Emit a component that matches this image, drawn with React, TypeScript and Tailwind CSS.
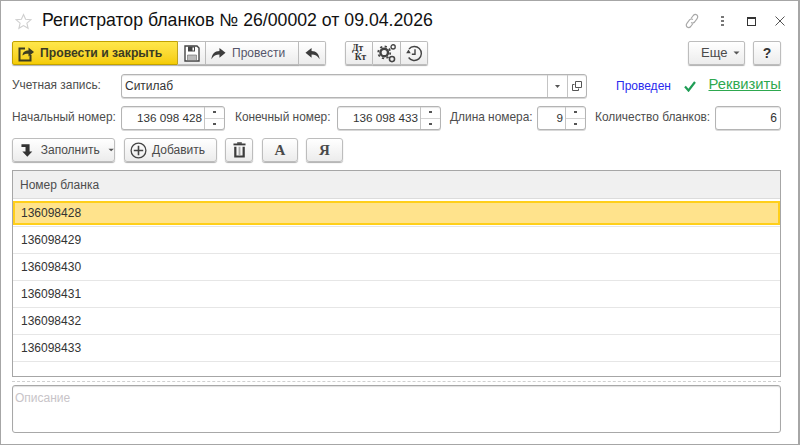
import React from 'react';

const BTN = 'flex items-center justify-center h-[24px] border border-[#bdbdbd] bg-linear-to-b from-white to-[#ececec] text-[12px] text-[#4a4a4a] rounded-[2px] shadow-[0_1px_1px_#b0b0b0]';
const FIELD = 'flex items-stretch h-[24px] border border-[#b4b4b4] rounded-[3px] bg-white shadow-[inset_0_1px_1px_#e4e4e4,0_1px_0_#d8d8d8]';
const LABEL = 'text-[11.9px] text-[#4d4d4d] whitespace-nowrap';

const Caret = () => (
  <svg width="7" height="4" viewBox="0 0 7 4"><path d="M0.5 0.5h6L3.5 3.5z" fill="#555" /></svg>
);

const Star = () => (
  <svg width="17" height="17" viewBox="0 0 17 17" fill="none"><path d="M8.5 1.5l2.1 4.8 5.2.5-3.9 3.4 1.2 5.1-4.6-2.7-4.6 2.7 1.2-5.1L1.2 6.8l5.2-.5z" stroke="#cfcfcf" strokeWidth="1.1" /></svg>
);

const PostClose = () => (
  <svg width="17" height="17" viewBox="0 0 17 17" fill="none">
    <path d="M7 3.5H1.5v12h11V10" stroke="#3b3b22" strokeWidth="2" />
    <path d="M4.5 10.5c.2-3.6 2.6-5 6-5V2.5l5.5 4.6-5.5 4.4V8.7c-2.5 0-4.5.3-6 1.8z" fill="#3b3b22" />
  </svg>
);

const Save = () => (
  <svg width="16" height="17" viewBox="0 0 16 17" fill="none">
    <path d="M1 1h12l2 2v13H1z" stroke="#444" strokeWidth="1.4" fill="#fff" />
    <path d="M4 1.5h7v5H4z" fill="#444" />
    <path d="M8.5 2.5h1.5v3H8.5z" fill="#fff" />
    <path d="M3.5 10h9v5.5h-9z" fill="#bbb" stroke="#666" strokeWidth="0.6" />
  </svg>
);

const ArrowRight = () => (
  <svg width="15" height="13" viewBox="0 0 16 13"><path d="M0.5 12.5C.6 7.5 4 3.8 9 3.8V0.5l6.5 5.3L9 11V7.6c-3.6 0-6.6 1.5-8.5 4.9z" fill="#3c3c3c" /></svg>
);

const ArrowLeft = () => (
  <svg width="15" height="13" viewBox="0 0 16 13"><path d="M15.5 12.5C15.4 7.5 12 3.8 7 3.8V0.5L.5 5.8 7 11V7.6c3.6 0 6.6 1.5 8.5 4.9z" fill="#3c3c3c" /></svg>
);

const Gears = () => (
  <svg width="20" height="20" viewBox="0 0 18 18" fill="none">
    <circle cx="6.5" cy="8.5" r="3.4" stroke="#444" strokeWidth="2.2" />
    <circle cx="6.5" cy="8.5" r="5.4" stroke="#444" strokeWidth="1.6" strokeDasharray="2 2.2" />
    <circle cx="14.5" cy="3.5" r="1.9" stroke="#444" strokeWidth="1.2" />
    <circle cx="13.5" cy="14.5" r="2.3" stroke="#444" strokeWidth="1.4" />
  </svg>
);

const History = () => (
  <svg width="17" height="17" viewBox="0 0 17 17" fill="none">
    <path d="M3 4A7 7 0 1 1 2.6 12.5" stroke="#444" strokeWidth="1.4" />
    <path d="M0.2 8.2h4.6L2.5 4.6z" fill="#444" />
    <path d="M9 4.2v5H5.8" stroke="#444" strokeWidth="1.4" />
  </svg>
);

const Fill = () => (
  <svg width="13" height="15" viewBox="0 0 13 15"><path d="M0.5 0.5h9v8h3l-5.5 6-5.500-6h3.500V3.500h-4.500z" fill="#333" /></svg>
);

const Plus = () => (
  <svg width="17" height="17" viewBox="0 0 17 17" fill="none">
    <circle cx="8.5" cy="8.5" r="7.4" stroke="#444" strokeWidth="1.3" />
    <path d="M8.5 3.8v9.4M3.8 8.5h9.4" stroke="#444" strokeWidth="1.6" />
  </svg>
);

const Trash = () => (
  <svg width="13" height="16" viewBox="0 0 14 17" fill="none">
    <path d="M.5 2.5h13" stroke="#3c3c3c" strokeWidth="2" />
    <path d="M4.5 1h5" stroke="#3c3c3c" strokeWidth="1.6" />
    <path d="M2.500 5v10.500h9V5" stroke="#3c3c3c" strokeWidth="2.4" />
    <path d="M6 5h2v9H6z" fill="#a8a8a8" />
  </svg>
);

const Link = () => (
  <svg width="16" height="16" viewBox="0 0 16 16" fill="none" stroke="#a8a8a8" strokeWidth="1.2">
    <path d="M7 5.5l2.300-3c1-1.200 2.600-1.300 3.600-.5s1.100 2.500.2 3.600L10.600 9c-1 1.200-2.600 1.300-3.500.5" />
    <path d="M9 10.500l-2.300 3c-1 1.200-2.600 1.300-3.600.5S2 11.500 2.900 10.400L5.400 7c1-1.200 2.600-1.300 3.500-.5" />
  </svg>
);

const Spin = () => (
  <div className="flex flex-col w-[20px] border-l border-[#c4c4c4]">
    <div className="flex-1 flex items-center justify-center border-b border-[#d4d4d4]">
      <span className="block w-[3px] h-[2px] bg-[#555]" />
    </div>
    <div className="flex-1 flex items-center justify-center">
      <span className="block w-[3px] h-[2px] bg-[#555]" />
    </div>
  </div>
);

const NumberField = ({ value, className }: { value: string; className: string }) => (
  <div className={`${FIELD} ${className}`}>
    <div className="flex-1 flex items-center justify-end pr-[2px] text-[11.7px] text-[#333]">{value}</div>
    <Spin />
  </div>
);

const rows = ['136098429', '136098430', '136098431', '136098432', '136098433'];

export default function App() {
  return (
    <div className="w-[800px] h-[445px] overflow-hidden border border-[#a6a6a6] border-r-2 bg-white flex flex-col pl-[11px] pr-[17px] font-['Liberation_Sans',Arial,sans-serif]">
      {/* Заголовок */}
      <div className="flex items-center h-[40px] shrink-0">
        <span className="ml-[3px] mr-[10px] flex"><Star /></span>
        <h1 className="text-[17.7px] text-[#111] leading-none whitespace-nowrap -mt-[1px]">Регистратор бланков № 26/00002 от 09.04.2026</h1>
        <div className="ml-auto flex items-center mr-[-4px]">
          <Link />
          <span className="ml-[21px] flex flex-col gap-[2px]">
            <span className="block w-[3px] h-[2px] bg-[#777]" />
            <span className="block w-[3px] h-[2px] bg-[#777]" />
            <span className="block w-[3px] h-[2px] bg-[#777]" />
          </span>
          <span className="ml-[23px] block w-[9px] h-[9px] border border-[#333] border-t-2" />
          <svg className="ml-[19px]" width="10" height="10" viewBox="0 0 10 10"><path d="M.5.5l9 9M9.5.5l-9 9" stroke="#555" strokeWidth="1" /></svg>
        </div>
      </div>

      {/* Командная панель */}
      <div className="flex items-center shrink-0">
        <button className="flex items-center w-[166px] h-[24px] border border-[#c2a200] rounded-l-[2px] bg-linear-to-b from-[#ffe74a] to-[#f5cc00] text-[12.2px] font-bold text-[#3b3b22] shadow-[0_1px_1px_#b0b0b0]">
          <span className="ml-[5px] mr-[5px] flex"><PostClose /></span>
          Провести и закрыть
        </button>
        <button className={`${BTN} w-[28px] border-l-0 rounded-none`}><Save /></button>
        <button className={`${BTN} w-[93px] border-l-0 rounded-none gap-[6px] justify-start pl-[5px]`}><ArrowRight /><span className="text-[#55556a]">Провести</span></button>
        <button className={`${BTN} w-[27px] border-l-0 rounded-l-none`}><ArrowLeft /></button>
        <button className={`${BTN} ml-[19px] w-[28px] rounded-r-none font-['Liberation_Serif',serif] font-bold text-[#333]`}>
          <span className="flex flex-col text-[9.5px] leading-[9px]"><span className="-ml-[3px]">Дт</span><span className="ml-[3px]">Кт</span></span>
        </button>
        <button className={`${BTN} w-[28px] border-l-0 rounded-none`}><Gears /></button>
        <button className={`${BTN} w-[27px] border-l-0 rounded-l-none`}><History /></button>
        <button className={`${BTN} ml-auto w-[57px] gap-[6px] justify-start pl-[12px]`}><span className="text-[13px]">Еще</span><Caret /></button>
        <button className={`${BTN} ml-[8px] w-[28px] text-[14px] font-bold text-[#333]`}>?</button>
      </div>

      {/* Учетная запись */}
      <div className="flex items-center mt-[9px] shrink-0">
        <span className={`${LABEL} w-[109px]`}>Учетная запись:</span>
        <div className={`${FIELD} w-[466px]`}>
          <div className="flex-1 flex items-center pl-[3px] text-[12px] text-[#333]">Ситилаб</div>
          <div className="w-[20px] flex items-center justify-center border-l border-[#c4c4c4]"><svg width="5" height="3" viewBox="0 0 5 3"><path d="M0 0h5L2.5 3z" fill="#555" /></svg></div>
          <div className="w-[19px] flex items-center justify-center border-l border-[#c4c4c4]">
            <svg width="10" height="10" viewBox="0 0 10 10" fill="none" stroke="#555"><path d="M3.5 .5h6v6h-6z" /><path d="M2.5 3.5H.5v6h6v-2" /></svg>
          </div>
        </div>
        <span className="ml-[29px] text-[12px] text-[#2a2aee] whitespace-nowrap">Проведен</span>
        <svg className="ml-[13px]" width="12" height="11" viewBox="0 0 12 11" fill="none"><path d="M1 5.5l3.5 4L11 1" stroke="#1f9d55" strokeWidth="2.2" /></svg>
        <a className="ml-auto text-[14.8px] text-[#2ea84f] underline whitespace-nowrap -mt-[3px]">Реквизиты</a>
      </div>

      {/* Номера */}
      <div className="flex items-center mt-[8px] shrink-0">
        <span className={`${LABEL} w-[109px]`}>Начальный номер:</span>
        <NumberField value="136 098 428" className="w-[104px]" />
        <span className={`${LABEL} ml-[10px] w-[102px]`}>Конечный номер:</span>
        <NumberField value="136 098 433" className="w-[104px]" />
        <span className={`${LABEL} ml-[9px] w-[87px]`}>Длина номера:</span>
        <NumberField value="9" className="w-[49px]" />
        <span className={`${LABEL} ml-[9px]`}>Количество бланков:</span>
        <div className={`${FIELD} ml-auto w-[66px] items-center justify-end pr-[3px] text-[12px] text-[#333]`}><span className="self-center">6</span></div>
      </div>

      {/* Кнопки таблицы */}
      <div className="flex items-center mt-[8px] shrink-0">
        <button className={`${BTN} w-[103px] gap-[8px] justify-start pl-[8px] rounded-[3px]`}><Fill />Заполнить<Caret /></button>
        <button className={`${BTN} ml-[9px] w-[93px] gap-[5px] justify-start pl-[5px] rounded-[3px]`}><Plus />Добавить</button>
        <button className={`${BTN} ml-[8px] w-[28px] rounded-[3px]`}><Trash /></button>
        <button className={`${BTN} ml-[9px] w-[36px] rounded-[3px] font-['Liberation_Serif',serif] font-bold text-[15px]`}>A</button>
        <button className={`${BTN} ml-[8px] w-[37px] rounded-[3px] font-['Liberation_Serif',serif] font-bold text-[15px]`}>Я</button>
      </div>

      {/* Таблица */}
      <div className="mt-[8px] h-[207px] shrink-0 border border-[#a6a6a6] flex flex-col overflow-hidden">
        <div className="h-[28px] shrink-0 flex items-center pl-[7px] bg-[#f0f0f0] border-b border-[#dcdcdc] text-[12px] text-[#4d4d4d]">Номер бланка</div>
        <div className="h-[2px] shrink-0" />
        <div className="h-[24px] shrink-0 flex items-center pl-[6px] bg-[#ffe38c] border-2 border-[#ffcf1a] text-[12px] text-[#333]">136098428</div>
        <div className="h-[1px] shrink-0 bg-[#e6e6e6] mt-[1px]" />
        {rows.map((r) => (
          <div key={r} className="h-[27px] shrink-0 flex items-center pl-[8px] border-b border-[#e6e6e6] text-[12px] text-[#333]">{r}</div>
        ))}
      </div>

      <div className="mt-[4px] shrink-0 border-t border-dashed border-[#d0d0d0]" />

      {/* Описание */}
      <div className="mt-[3px] h-[48px] shrink-0 border border-[#a8a8a8] rounded-[3px] shadow-[inset_0_1px_1px_#e0e0e0] pl-[2px] pt-[3px] text-[12px] text-[#c8c4c8]">Описание</div>
    </div>
  );
}
